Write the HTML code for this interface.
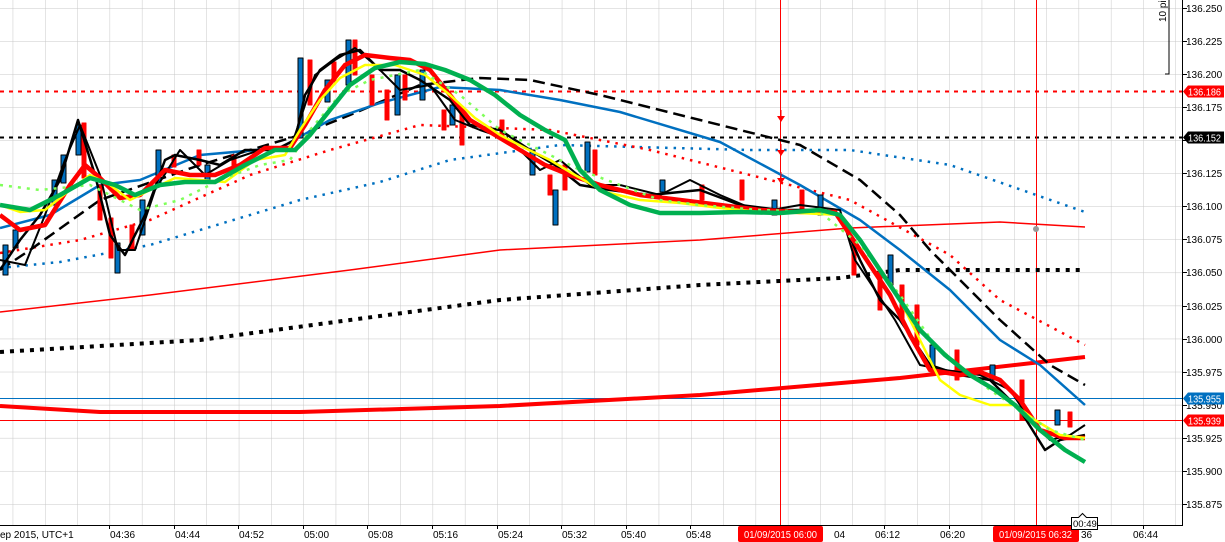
<!DOCTYPE html>
<html><head><meta charset="utf-8"><style>
html,body{margin:0;padding:0;background:#fff;width:1225px;height:542px;overflow:hidden}
svg{display:block;font-family:"Liberation Sans",sans-serif;font-size:10px}
</style></head><body>
<svg width="1225" height="542" viewBox="0 0 1225 542">
<defs>
<pattern id="g" x="12.7" y="8" width="32.3" height="33.07" patternUnits="userSpaceOnUse">
<path d="M0 0V33.07M0 0H32.3" stroke="#c8c8c8" stroke-width="1" fill="none"/>
</pattern>
<clipPath id="c"><rect x="0" y="0" width="1182" height="525"/></clipPath>
</defs>
<rect x="0" y="0" width="1182" height="525" fill="url(#g)"/>
<g clip-path="url(#c)" fill="none" stroke-linejoin="round">
<line x1="0" y1="91.5" x2="1182" y2="91.5" stroke="#f00" stroke-width="2" stroke-dasharray="4 5"/>
<line x1="0" y1="137.5" x2="1182" y2="137.5" stroke="#000" stroke-width="2" stroke-dasharray="4 5"/>
<line x1="0" y1="398.5" x2="1182" y2="398.5" stroke="#0070c0" stroke-width="1"/>
<line x1="0" y1="420.5" x2="1182" y2="420.5" stroke="#f00" stroke-width="1"/>
<line x1="780.5" y1="0" x2="780.5" y2="525" stroke="#f00" stroke-width="1"/>
<line x1="1036.5" y1="0" x2="1036.5" y2="525" stroke="#f00" stroke-width="1"/>
<polyline points="0,406 100,412 300,412 500,406 700,395 900,378 1085,357" stroke="#f00" stroke-width="4"/>
<polyline points="0,312 150,295 350,270 500,250 700,240 850,228 1000,222 1085,227" stroke="#f00" stroke-width="1.5"/>
<polyline points="0,352 200,340 350,320 500,300 700,285 840,278 900,270 1085,270" stroke="#000" stroke-width="4" stroke-dasharray="4 6"/>
<polyline points="0,268 60,262 150,245 300,200 380,182 450,160 560,145 750,150 850,150 950,165 1085,212" stroke="#0070c0" stroke-width="2.5" stroke-dasharray="2.5 6"/>
<polyline points="0,253 80,240 150,220 250,175 330,150 420,125 550,130 650,150 750,175 850,200 950,255 1000,300 1085,345" stroke="#f00" stroke-width="2.5" stroke-dasharray="2.5 6"/>
<polyline points="0,270 30,250 100,200 200,165 300,135 350,115 420,85 480,78 530,80 600,95 700,120 800,145 860,180 900,215 930,250 1000,320 1050,365 1085,385" stroke="#000" stroke-width="2.5" stroke-dasharray="12 6"/>
<polyline points="0,228 50,215 100,185 140,180 200,155 280,148 330,120 380,103 440,87 500,90 560,100 620,112 720,142 800,185 860,220 900,250 950,290 1000,340 1040,365 1085,405" stroke="#0070c0" stroke-width="2.5"/>
<g stroke-width="1">
<g stroke="#000" fill="#0070c0">
<rect x="3" y="245" width="5" height="30"/><rect x="13" y="230" width="5" height="18"/><rect x="52" y="180" width="5" height="25"/><rect x="61" y="155" width="5" height="28"/><rect x="76" y="125" width="5" height="30"/>
<rect x="115" y="243" width="5" height="30"/><rect x="140" y="200" width="5" height="35"/><rect x="156" y="150" width="5" height="35"/><rect x="205" y="165" width="5" height="15"/>
<rect x="298" y="58" width="5" height="80"/><rect x="325" y="80" width="5" height="22"/><rect x="346" y="40" width="5" height="45"/><rect x="395" y="75" width="5" height="40"/><rect x="420" y="70" width="5" height="30"/>
<rect x="450" y="105" width="5" height="20"/><rect x="530" y="150" width="5" height="25"/><rect x="553" y="190" width="5" height="35"/><rect x="585" y="142" width="5" height="30"/><rect x="660" y="180" width="5" height="12"/>
<rect x="772" y="200" width="5" height="15"/><rect x="818" y="195" width="5" height="20"/><rect x="888" y="255" width="5" height="30"/><rect x="930" y="345" width="5" height="25"/><rect x="990" y="365" width="5" height="15"/><rect x="1055" y="410" width="5" height="15"/>
</g>
<g stroke="#f00" fill="#f00">
<rect x="82" y="123" width="4" height="55"/><rect x="98" y="185" width="4" height="35"/><rect x="109" y="218" width="4" height="40"/><rect x="130" y="225" width="4" height="25"/><rect x="172" y="155" width="4" height="12"/><rect x="197" y="150" width="4" height="15"/><rect x="232" y="155" width="4" height="12"/>
<rect x="308" y="60" width="4" height="45"/><rect x="332" y="62" width="4" height="20"/><rect x="353" y="40" width="4" height="35"/><rect x="370" y="75" width="4" height="30"/><rect x="385" y="90" width="4" height="30"/><rect x="403" y="75" width="4" height="25"/><rect x="442" y="110" width="4" height="20"/>
<rect x="460" y="110" width="4" height="35"/><rect x="500" y="120" width="4" height="18"/><rect x="548" y="175" width="4" height="20"/><rect x="563" y="165" width="4" height="25"/><rect x="593" y="150" width="4" height="25"/><rect x="700" y="185" width="4" height="15"/>
<rect x="740" y="180" width="4" height="20"/><rect x="800" y="190" width="4" height="20"/><rect x="852" y="240" width="4" height="35"/><rect x="878" y="270" width="4" height="40"/><rect x="900" y="285" width="4" height="35"/><rect x="915" y="305" width="4" height="40"/><rect x="955" y="350" width="4" height="30"/><rect x="1020" y="380" width="4" height="40"/><rect x="1068" y="412" width="4" height="15"/>
</g>
</g>
<polyline points="0,270 20,240 40,215 60,180 78,120 95,175 110,235 125,255 145,215 165,160 175,155 200,160 220,165 245,150 275,150 295,140 305,95 320,70 340,55 360,50 380,70 400,70 420,80 450,100 470,125 500,130 530,150 555,165 580,185 610,190 650,195 700,190 740,205 780,210 810,210 840,215 860,260 880,300 900,320 930,365 960,375 990,380 1020,410 1045,450 1060,440 1085,435" stroke="#000" stroke-width="2.5"/>
<polyline points="0,260 25,265 45,215 65,160 80,125 100,175 118,250 135,250 155,190 180,150 205,175 230,160 260,150 290,150 300,120 315,75 335,60 355,48 375,65 400,90 430,85 455,120 480,130 510,140 540,170 560,160 590,185 620,185 660,195 690,180 720,195 760,212 800,205 840,210 855,260 875,290 895,320 920,365 945,370 980,375 1010,390 1030,420 1050,440 1070,435 1085,425" stroke="#000" stroke-width="2"/>
<polyline points="0,215 20,230 45,225 70,185 85,165 100,178 120,198 140,195 165,170 190,175 215,175 240,165 265,148 290,148 305,125 325,90 345,65 365,55 390,58 410,60 430,70 450,95 470,120 495,135 520,150 545,165 570,175 600,185 640,195 680,200 720,205 760,210 800,212 835,212 850,235 870,265 890,295 910,335 930,370 960,375 980,372 1000,380 1020,400 1040,430 1065,438 1085,438" stroke="#f00" stroke-width="4.5"/>
<polyline points="0,205 20,212 45,210 70,190 90,175 110,185 130,200 150,190 175,178 200,180 225,182 255,160 285,155 300,130 320,100 340,78 365,65 395,65 425,75 450,95 475,118 500,135 525,148 550,160 575,175 605,192 640,200 680,203 720,208 760,212 800,213 840,215 860,240 880,270 900,300 920,340 940,380 960,395 990,405 1015,405 1035,420 1060,435 1085,438" stroke="#ff0" stroke-width="2.5"/>
<polyline points="0,185 40,190 90,185 140,210 180,200 220,180 260,165 290,160 310,130 340,95 370,80 420,70 460,95 500,130 540,150 580,170 620,185 660,200 700,205 760,210 820,212 860,245 900,295 935,345 965,370 990,390 1020,410 1050,430 1085,440" stroke="#7fff5a" stroke-width="2.5" stroke-dasharray="3 6"/>
<polyline points="0,205 30,210 60,195 90,178 115,185 135,195 160,185 185,182 215,182 245,165 275,150 295,150 310,135 330,110 350,85 375,68 400,62 425,64 445,70 470,80 495,95 520,115 545,130 565,140 580,170 600,190 630,205 660,213 700,213 740,212 780,213 820,210 840,215 860,240 880,270 900,300 920,330 945,355 970,375 995,390 1015,405 1040,430 1065,450 1085,462" stroke="#00b050" stroke-width="4.5"/>
<path d="M777 116h8l-4 6z M777 150h8l-4 6z M777 178h8l-4 6z" fill="#f00" stroke="none"/>
<path d="M781 110v8 M781 144v8 M781 172v8" stroke="#f00"/>
<circle cx="1036" cy="229" r="3" fill="#999" stroke="none"/>
</g>
<line x1="1182.5" y1="0" x2="1182.5" y2="525" stroke="#000"/>
<line x1="0" y1="525.5" x2="1183" y2="525.5" stroke="#000"/>
<path d="M1169 0V74h-4" stroke="#000" fill="none"/>
<text x="0" y="0" transform="translate(1166,22) rotate(-90)" font-size="10">10 pips</text>
<g fill="#000">
<g stroke="#000">
<path d="M1183 8.5h4M1183 41.5h4M1183 74.5h4M1183 107.5h4M1183 140.5h4M1183 173.5h4M1183 206.5h4M1183 239.5h4M1183 272.5h4M1183 306.5h4M1183 339.5h4M1183 372.5h4M1183 405.5h4M1183 438.5h4M1183 471.5h4M1183 504.5h4"/>
<path d="M109.5 525v4M174.5 525v4M238.5 525v4M303.5 525v4M367.5 525v4M432.5 525v4M497.5 525v4M561.5 525v4M626.5 525v4M690.5 525v4M820.5 525v4M884.5 525v4M949.5 525v4M1078.5 525v4M1143.5 525v4"/>
</g>
<text x="1186" y="12">136.250</text><text x="1186" y="45">136.225</text><text x="1186" y="78">136.200</text><text x="1186" y="111">136.175</text>
<text x="1186" y="177">136.125</text><text x="1186" y="210">136.100</text><text x="1186" y="243">136.075</text><text x="1186" y="276">136.050</text><text x="1186" y="310">136.025</text><text x="1186" y="343">136.000</text><text x="1186" y="376">135.975</text><text x="1186" y="409">135.950</text><text x="1186" y="442">135.925</text><text x="1186" y="475">135.900</text><text x="1186" y="508">135.875</text>
<text x="0" y="538">ep 2015, UTC+1</text><text x="110" y="538">04:36</text><text x="175" y="538">04:44</text><text x="239" y="538">04:52</text><text x="304" y="538">05:00</text><text x="368" y="538">05:08</text><text x="433" y="538">05:16</text><text x="498" y="538">05:24</text><text x="562" y="538">05:32</text><text x="621" y="538">05:40</text><text x="686" y="538">05:48</text><text x="834" y="538">04</text><text x="875" y="538">06:12</text><text x="940" y="538">06:20</text><text x="1081" y="538">36</text><text x="1133" y="538">06:44</text>
</g>
<g font-size="10">
<path d="M1183 91.5l5-6h36v12h-36z" fill="#f00"/><text x="1188" y="95.5" fill="#fff" textLength="33" lengthAdjust="spacingAndGlyphs">136.186</text>
<path d="M1183 137.5l5-6h36v12h-36z" fill="#000"/><text x="1188" y="141.5" fill="#fff" textLength="33" lengthAdjust="spacingAndGlyphs">136.152</text>
<path d="M1183 398.5l5-6h36v12h-36z" fill="#0070c0"/><text x="1188" y="402.5" fill="#fff" textLength="33" lengthAdjust="spacingAndGlyphs">135.955</text>
<path d="M1183 420.5l5-6h36v12h-36z" fill="#f00"/><text x="1188" y="424.5" fill="#fff" textLength="33" lengthAdjust="spacingAndGlyphs">135.939</text>
</g>
<rect x="738" y="526" width="85" height="16" rx="2" fill="#f00"/><text x="744" y="538" fill="#fff" textLength="73" lengthAdjust="spacingAndGlyphs">01/09/2015 06:00</text>
<rect x="993" y="526" width="86" height="16" rx="2" fill="#f00"/><text x="999" y="538" fill="#fff" textLength="73" lengthAdjust="spacingAndGlyphs">01/09/2015 06:32</text>
<path d="M1071.5 517.5h7l4-4 4 4h11v12h-26z" fill="#fff" stroke="#000"/><text x="1073" y="527" font-size="9.5">00:49</text>
</svg>
</body></html>
